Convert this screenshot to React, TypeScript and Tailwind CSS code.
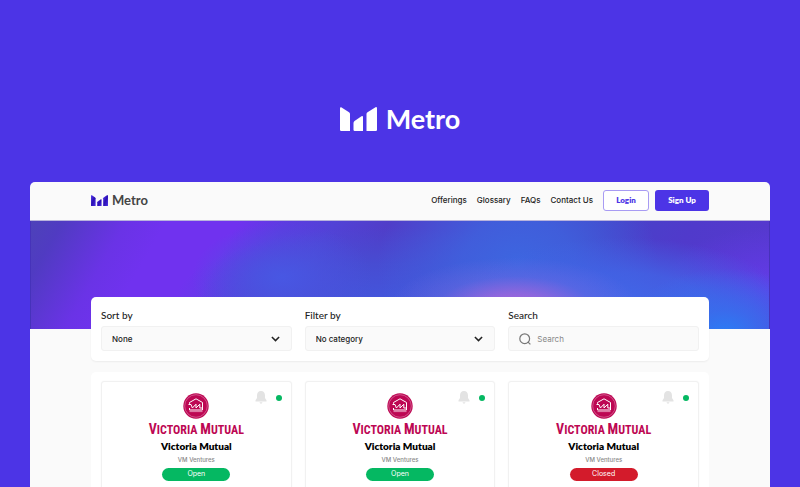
import React from "react";

const navLinks = ["Offerings", "Glossary", "FAQs", "Contact Us"];

const offerings = [
  { id: 1, name: "Victoria Mutual", company: "VM Ventures", status: "Open" },
  { id: 2, name: "Victoria Mutual", company: "VM Ventures", status: "Open" },
  { id: 3, name: "Victoria Mutual", company: "VM Ventures", status: "Closed" },
];

function MetroMark({ className, tinted = false }: { className: string; tinted?: boolean }) {
  return (
    <svg viewBox="0 0 37 24" className={className} aria-hidden="true">
      <defs>
        <linearGradient id="markFade" x1="0" y1="0" x2="1" y2="1">
          <stop offset="0" stopColor="#5a3df0" />
          <stop offset="0.5" stopColor="#2c10b4" />
          <stop offset="1" stopColor="#4a30e4" />
        </linearGradient>
      </defs>
      <g fill={tinted ? "url(#markFade)" : "currentColor"}>
        <path d="M0 1.2Q0 0 1.2 .2L9 5.2Q10 6 10 7V24H1.2Q0 24 0 22.8Z" />
        <path d="M13.5 16Q13.5 14.8 14.5 14L21.5 9.3Q23 8.7 23 10V24H14.7Q13.5 24 13.5 22.8Z" />
        <path d="M26.5 7Q26.5 6 27.5 5.2L35.5 .2Q37 -.2 37 1.2V22.8Q37 24 35.8 24H26.5Z" />
      </g>
    </svg>
  );
}

function Chevron() {
  return (
    <svg
      viewBox="0 0 10 6"
      className="pointer-events-none absolute top-1/2 right-3 h-[6px] w-[9px] -translate-y-1/2"
      fill="none"
      stroke="#222"
      strokeWidth="1.7"
      aria-hidden="true"
    >
      <path d="M1 .8 5 4.8 9 .8" />
    </svg>
  );
}

function SelectField({ id, label, value }: { id: string; label: string; value: string }) {
  return (
    <div className="min-w-0">
      <label htmlFor={id} className="block text-[10px] leading-[14px] font-medium text-[#222]">
        {label}
      </label>
      <div className="relative mt-1">
        <select
          id={id}
          className="block h-[25px] w-full appearance-none rounded-[3px] border border-[#f1f1f1] bg-[#fafafa] pr-6 pl-[10px] font-[Inter,sans-serif] text-[8px] font-medium text-[#222]"
        >
          <option>{value}</option>
        </select>
        <Chevron />
      </div>
    </div>
  );
}

function VictoriaMutualLogo() {
  return (
    <div className="flex flex-col items-center text-[#bd0753]">
      <svg viewBox="0 0 26 26" className="size-[26px]" aria-hidden="true">
        <circle cx="13" cy="13" r="12.7" fill="#bd0753" />
        <circle cx="13" cy="13" r="11.3" fill="none" stroke="#dc86ac" strokeWidth=".6" />
        <g fill="none" stroke="#fff" strokeWidth="1">
          <path d="M6.5 10.800V9.500L13 5.800 19.500 9.500V17H6.500V15" />
          <path d="M5.500 11.500H8L9.400 15 13 11.200V15L16.800 11.200V15H19.500" />
        </g>
        <path d="M6.500 18.600H19.500" stroke="#eaa6c3" strokeWidth=".8" />
      </svg>
      <div className="h-[18px] font-['Liberation_Sans_Narrow','Roboto_Condensed','DejaVu_Sans_Condensed',sans-serif] text-[12px] leading-[21px] font-bold whitespace-nowrap">
        <span className="text-[14px]">V</span>ICTORIA <span className="text-[14px]">M</span>UTUAL
      </div>
    </div>
  );
}

function OfferingCard({ name, company, status }: { name: string; company: string; status: string }) {
  return (
    <article className="relative flex h-[130px] min-w-0 flex-col items-center rounded-[3px] border border-[#f1f1f1] bg-white pt-[11px] shadow-[0_0_2px_rgba(0,0,0,0.04)]">
      <div className="absolute top-[9px] right-[9px] flex items-center gap-[9px]">
        <button type="button" aria-label="Notify me" className="block">
          <svg viewBox="0 0 12 13" className="h-[13px] w-3" fill="#e3e3e3" aria-hidden="true">
            <path d="M6 0C3.4 0 2 2 2 4.4V7L.5 9.3V10.5H11.5V9.3L10 7V4.4C10 2 8.600 0 6 0Z" />
            <path d="M4.500 11.300H7.500Q7.200 12.700 6 12.700T4.500 11.300Z" />
          </svg>
        </button>
        <span className="size-[6px] rounded-full bg-[#05b862]" />
      </div>
      <VictoriaMutualLogo />
      <h2 className="mt-[2px] text-[10px] leading-[14px] font-extrabold text-black">{name}</h2>
      <p className="mt-[2px] font-[Inter,sans-serif] text-[6px] leading-[9px] font-medium text-[#888]">{company}</p>
      <span
        className={
          status === "Open"
            ? "mt-1 flex h-[13px] w-[68px] items-center justify-center rounded-full bg-[#05b862] font-[Inter,sans-serif] text-[7px] text-white"
            : "mt-1 flex h-[13px] w-[68px] items-center justify-center rounded-full bg-[#d31b2b] font-[Inter,sans-serif] text-[7px] text-white"
        }
      >
        {status}
      </span>
    </article>
  );
}

export default function App() {
  return (
    <div className="flex h-screen flex-col overflow-hidden bg-[#4c34e6] px-[30px] font-[Lato,sans-serif]">
      <div className="flex items-center justify-center gap-[9px] pt-[102px] pb-[46px] text-white">
        <MetroMark className="h-6 w-[37px]" />
        <span className="text-[27px] leading-[34px] font-bold">Metro</span>
      </div>

      <div className="min-h-0 flex-1 overflow-hidden rounded-t-[5px] bg-[#fafafa]">
        <header className="border-b border-[#b9b4dc] px-[61px]">
          <div className="mx-auto flex h-[38px] max-w-[1100px] items-center justify-between pb-[2px]">
            <a href="#" className="flex items-center gap-1 text-[#444]">
              <MetroMark className="h-[11px] w-[17px]" tinted />
              <span className="text-[13px] leading-[16px] font-bold">Metro</span>
            </a>
            <nav className="flex items-center gap-[10px] font-[Inter,sans-serif] text-[8px] font-medium text-[#222]">
              {navLinks.map((link) => (
                <a key={link} href="#" className="whitespace-nowrap">
                  {link}
                </a>
              ))}
              <div className="flex gap-[6px]">
                <button type="button" className="h-[21px] w-[46px] rounded-[3px] border border-[#a89bf3] bg-white font-[Lato,sans-serif] font-extrabold text-[#4c34e6]">
                  Login
                </button>
                <button type="button" className="h-[21px] w-[54px] rounded-[3px] bg-[#4c34e6] font-[Lato,sans-serif] font-extrabold text-white">
                  Sign Up
                </button>
              </div>
            </nav>
          </div>
        </header>

        <div className="h-[108px] border-x border-[#4632ba] bg-[#5040c8] bg-[radial-gradient(ellipse_125px_50px_at_65.5%_80%,#b062d8_0%,#a067dccc_28%,#7f6be255_62%,#5a6ee400_100%),radial-gradient(ellipse_100px_65px_at_94%_104%,#2b7df5_0%,#3670eecc_35%,#4862ea00_100%),radial-gradient(ellipse_170px_70px_at_80%_80%,#4168e9_0%,#4165e6cc_50%,#4660e000_100%),radial-gradient(ellipse_140px_115px_at_66%_40%,#3d66e0_0%,#3e64dfcc_40%,#4455d400_100%),radial-gradient(ellipse_120px_65px_at_101%_65%,#643bea_0%,#5c3ad800_100%),radial-gradient(ellipse_90px_55px_at_34%_52%,#4857e3_0%,#4a54e099_45%,#4c4cd800_100%),radial-gradient(ellipse_210px_75px_at_48%_75%,#4356dc_0%,#4452d6bb_50%,#484cd200_100%),linear-gradient(120deg,#4d42b9_0%,#503bc2_4%,#6a33e6_12%,#7032ef_17%,#7032ef_26%,#5c3ce0_32%,#5242d6_38%,#503dc8_45%,#503dc8_53%,#4545c8_70%,#503acb_83%,#5938d0_100%)]" />

        <main className="px-[61px]">
          <div className="mx-auto max-w-[1100px]">
            <form
              className="relative -mt-8 grid grid-cols-3 gap-x-[13px] rounded-[5px] bg-white px-[10px] pt-[11px] pb-[10px] shadow-[0_1px_2px_rgba(0,0,0,0.06)]"
              onSubmit={(event) => event.preventDefault()}
            >
              <SelectField id="sort" label="Sort by" value="None" />
              <SelectField id="filter" label="Filter by" value="No category" />
              <div className="min-w-0">
                <label htmlFor="search" className="block text-[10px] leading-[14px] font-medium text-[#222]">
                  Search
                </label>
                <div className="relative mt-1">
                  <svg
                    viewBox="0 0 12 12"
                    className="absolute top-[7px] left-[11px] size-3"
                    fill="none"
                    stroke="#777"
                    strokeWidth="1.2"
                    aria-hidden="true"
                  >
                    <circle cx="5.700" cy="5.700" r="4.900" />
                    <path d="M8.800 8.800 11.400 11.400" />
                  </svg>
                  <input
                    id="search"
                    type="text"
                    placeholder="Search"
                    className="block h-[25px] w-full rounded-[3px] border border-[#f1f1f1] bg-[#fafafa] pr-3 pl-7 font-[Inter,sans-serif] text-[8px] placeholder:text-[#888]"
                  />
                </div>
              </div>
            </form>

            <section className="mt-[11px] grid grid-cols-3 gap-x-[13px] rounded-[5px] bg-white px-[10px] pt-[9px] pb-[10px]">
              {offerings.map((item) => (
                <OfferingCard key={item.id} name={item.name} company={item.company} status={item.status} />
              ))}
            </section>
          </div>
        </main>
      </div>
    </div>
  );
}
